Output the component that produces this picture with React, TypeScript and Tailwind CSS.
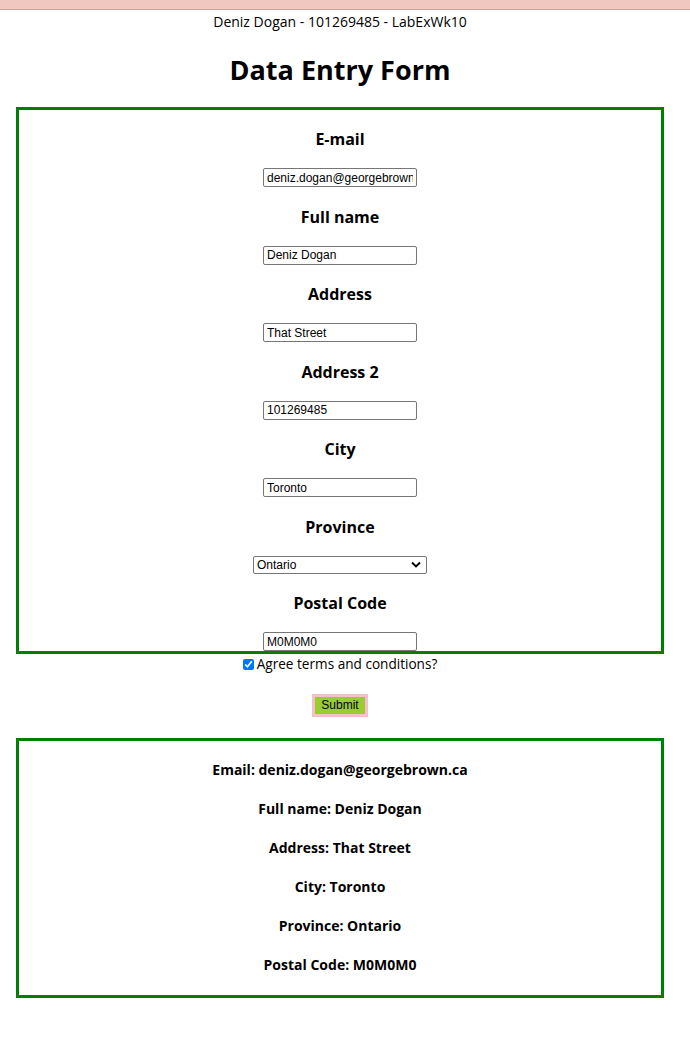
import React from "react";

const labelCls = "text-[16px] leading-[24px] font-bold text-black";
const inputCls =
  "w-[154px] h-[19px] border border-[#767676] rounded-[2px] px-[3px] text-[12px] leading-[17px] text-black outline-none bg-white";

function Field({ label, value, first }: { label: string; value: string; first?: boolean }) {
  return (
    <div className={`flex flex-col items-center ${first ? "" : "mt-[17.5px]"}`}>
      <div className={labelCls}>{label}</div>
      <input
        className={`${inputCls} mt-[17px]`}
        style={{ fontFamily: '"Liberation Sans", Arial, sans-serif' }}
        defaultValue={value}
        readOnly
      />
    </div>
  );
}

export default function App() {
  const results = [
    "Email: deniz.dogan@georgebrown.ca",
    "Full name: Deniz Dogan",
    "Address: That Street",
    "City: Toronto",
    "Province: Ontario",
    "Postal Code: M0M0M0",
  ];
  return (
    <div
      className="w-[690px] min-h-[1038px] bg-white text-black"
      style={{ fontFamily: '"Open Sans", "Noto Sans", sans-serif' }}
    >
      <div className="h-[10px] bg-[#f0c8c0] border-b border-[#c4a8a2]" />
      <div className="w-[680px]">
        <div className="mt-[2px] text-center text-[14px] leading-[20px]">
          Deniz Dogan - 101269485 - LabExWk10
        </div>
        <h1 className="mt-[18px] text-center text-[27px] leading-[40px] font-bold">Data Entry Form</h1>

        <div className="mt-[17px] ml-[16px] w-[648px] h-[547px] border-[3px] border-[#008000] pt-[17px] flex flex-col items-center">
          <Field label="E-mail" value="deniz.dogan@georgebrown.ca" first />
          <Field label="Full name" value="Deniz Dogan" />
          <Field label="Address" value="That Street" />
          <Field label="Address 2" value="101269485" />
          <Field label="City" value="Toronto" />
          <div className="mt-[17.5px] flex flex-col items-center">
            <div className={labelCls}>Province</div>
            <div
              className="mt-[17px] w-[174px] h-[18px] border border-[#767676] rounded-[2px] flex items-center justify-between pl-[3px] pr-[5px] text-[12px] leading-[16px]"
              style={{ fontFamily: '"Liberation Sans", Arial, sans-serif' }}
            >
              <span>Ontario</span>
              <svg width="10" height="7" viewBox="0 0 10 7" fill="none">
                <path d="M1 1.5L5 5.5L9 1.5" stroke="#000" strokeWidth="1.8" />
              </svg>
            </div>
          </div>
          <Field label="Postal Code" value="M0M0M0" />
        </div>

        <div className="flex items-center justify-center text-[13.6px] leading-[20px]">
          <input type="checkbox" defaultChecked className="w-[11px] h-[11px] mr-[3px] accent-[#0075ff]" />
          <span>Agree terms and conditions?</span>
        </div>

        <div className="mt-[20px] flex justify-center">
          <button
            className="h-[23px] w-[56px] border-[3px] border-[#f4c2c6] bg-[#9acd32] text-[12px] text-black leading-[17px]"
            style={{ fontFamily: '"Liberation Sans", Arial, sans-serif' }}
          >
            Submit
          </button>
        </div>

        <div className="mt-[21px] ml-[16px] w-[648px] border-[3px] border-[#008000] pt-[19px] pb-[20px] flex flex-col items-center gap-[19px]">
          {results.map((r) => (
            <div key={r} className="text-[14px] leading-[20px] font-bold">
              {r}
            </div>
          ))}
        </div>
      </div>
    </div>
  );
}
